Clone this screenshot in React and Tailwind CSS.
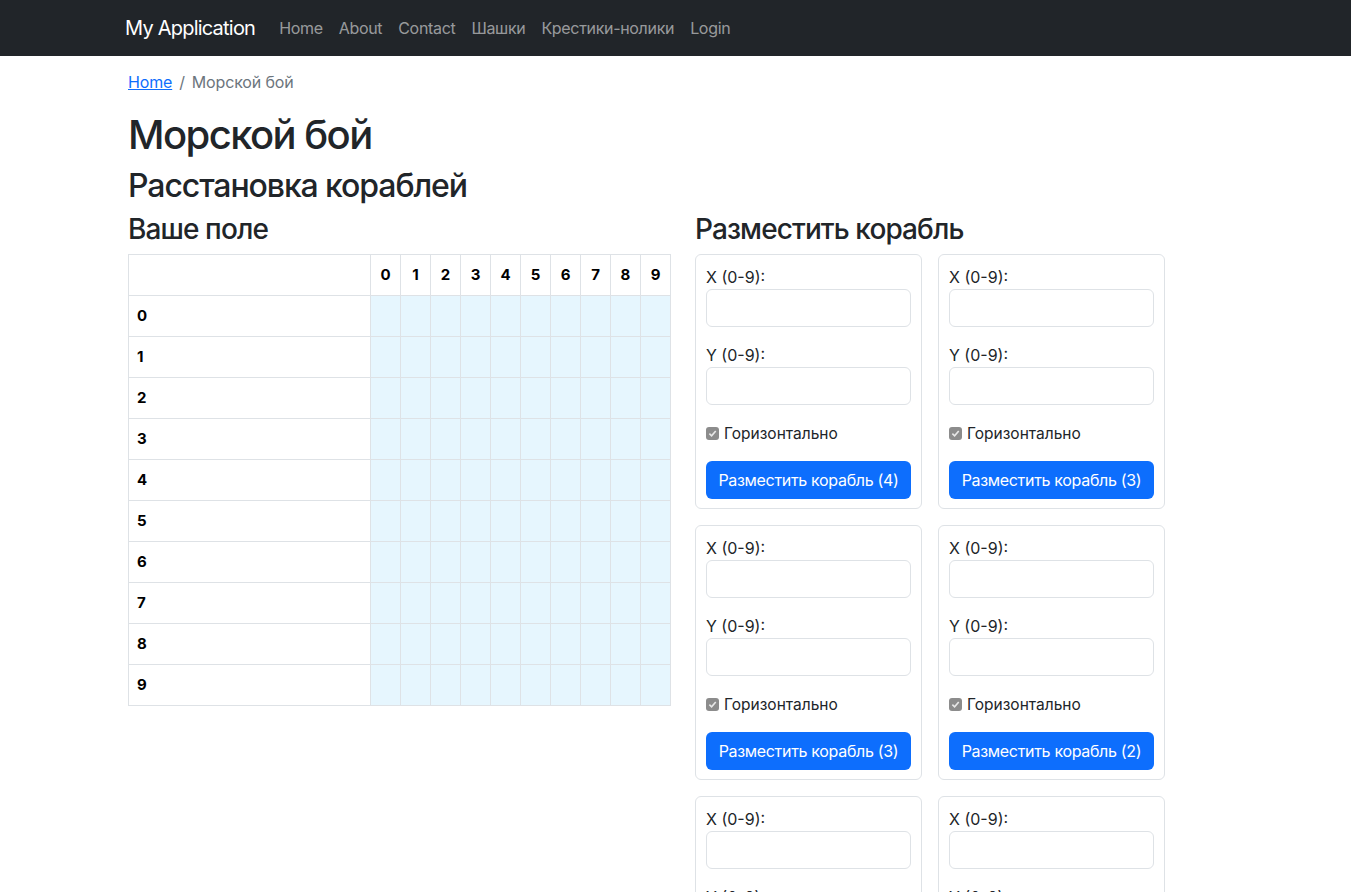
import React from "react";

const font = { fontFamily: "Inter, 'Noto Sans', sans-serif" };

const links = ["Home", "About", "Contact", "Шашки", "Крестики-нолики", "Login"];
const ships = [4, 3, 3, 2, 2, 2];
const nums = [0, 1, 2, 3, 4, 5, 6, 7, 8, 9];

const Check = () => (
  <span className="inline-flex items-center justify-center w-[13px] h-[13px] rounded-[3px] bg-[#8c8c8c]">
    <svg width="9" height="9" viewBox="0 0 10 10">
      <path d="M1.5 5.2 L4 7.6 L8.6 2.2" fill="none" stroke="#e8e8e8" strokeWidth="1.8" />
    </svg>
  </span>
);

const ShipCard = ({ count }) => (
  <div className="border border-[#dee2e6] rounded-md px-[10px] pt-[10px] pb-[10px] h-[255px]">
    <label className="block text-base leading-6">X (0-9):</label>
    <div className="h-[38px] border border-[#dee2e6] rounded-md mb-4" />
    <label className="block text-base leading-6">Y (0-9):</label>
    <div className="h-[38px] border border-[#dee2e6] rounded-md mb-4" />
    <div className="flex items-center gap-[5px] h-6 mb-4 pt-[2px]">
      <Check />
      <span className="text-[15.5px]">Горизонтально</span>
    </div>
    <button className="w-full h-[38px] bg-[#0d6efd] text-white rounded-md text-base tracking-[-0.02em]">
      Разместить корабль ({count})
    </button>
  </div>
);

export default function App() {
  return (
    <div style={font} className="text-[#212529] bg-white min-h-[892px]">
      <nav className="bg-[#212529] h-14 flex items-center pl-[125px]">
        <span className="text-white text-xl tracking-[-0.039em] mr-6">My Application</span>
        <div className="flex gap-4">
          {links.map((l) => (
            <span key={l} className="text-[rgba(255,255,255,0.55)] text-base tracking-[-0.02em]">
              {l}
            </span>
          ))}
        </div>
      </nav>
      <div className="pl-[128px]">
        <div className="w-[1109px]">
          <div className="flex items-center mt-[14px] mb-[17px] text-base leading-6 tracking-[-0.01em]">
            <span className="text-[#0d6efd] underline">Home</span>
            <span className="text-[#6c757d] px-[7px]">/</span>
            <span className="text-[#6c757d]">Морской бой</span>
          </div>
          <h1 className="text-[40px] font-medium leading-[1.2] tracking-[-0.039em] mb-2">Морской бой</h1>
          <h2 className="text-[32px] font-medium leading-[1.2] tracking-[-0.034em] mb-2">Расстановка кораблей</h2>
          <div className="grid grid-cols-[542px_1fr] gap-x-[25px]">
            <div>
              <h3 className="text-[28px] font-medium leading-[1.2] tracking-[-0.032em] mb-[7px]">Ваше поле</h3>
              <table className="w-[542px] border-collapse border border-[#dee2e6] table-fixed">
                <colgroup>
                  <col className="w-[242px]" />
                  {nums.map((n) => (
                    <col key={n} className="w-[30px]" />
                  ))}
                </colgroup>
                <thead>
                  <tr className="h-[41px]">
                    <th className="border border-[#dee2e6]" />
                    {nums.map((n) => (
                      <th key={n} className="border border-[#dee2e6] font-bold text-black text-[15px] text-center">
                        {n}
                      </th>
                    ))}
                  </tr>
                </thead>
                <tbody>
                  {nums.map((r) => (
                    <tr key={r} className="h-[41px]">
                      <td className="border border-[#dee2e6] font-bold text-black text-[15px] px-2">{r}</td>
                      {nums.map((c) => (
                        <td key={c} className="border border-[#dee2e6] bg-[#e6f6fe]" />
                      ))}
                    </tr>
                  ))}
                </tbody>
              </table>
            </div>
            <div>
              <h3 className="text-[28px] font-medium leading-[1.2] tracking-[-0.032em] mb-[7px]">Разместить корабль</h3>
              <div className="grid grid-cols-[227px_227px] gap-4">
                {ships.map((s, i) => (
                  <ShipCard key={i} count={s} />
                ))}
              </div>
            </div>
          </div>
        </div>
      </div>
    </div>
  );
}
